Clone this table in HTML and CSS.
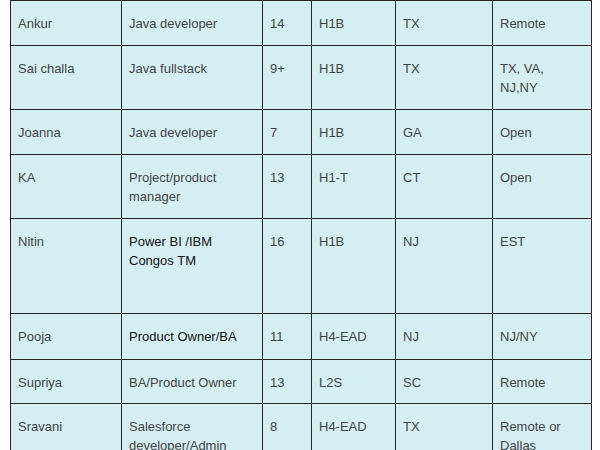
FILE: index.html
```html
<!DOCTYPE html>
<html>
<head>
<meta charset="utf-8">
<link rel="stylesheet" href="styles.css">
</head>
<body>
<table class="grid">
  <colgroup>
    <col class="c-name"><col class="c-role"><col class="c-exp"><col class="c-visa"><col class="c-state"><col class="c-loc">
  </colgroup>
  <tbody>
    <tr><td>Ankur</td><td>Java developer</td><td>14</td><td>H1B</td><td>TX</td><td>Remote</td></tr>
    <tr><td>Sai challa</td><td>Java fullstack</td><td>9+</td><td>H1B</td><td>TX</td><td>TX, VA,<br>NJ,NY</td></tr>
    <tr><td>Joanna</td><td>Java developer</td><td>7</td><td>H1B</td><td>GA</td><td>Open</td></tr>
    <tr><td>KA</td><td>Project/product manager</td><td>13</td><td>H1-T</td><td>CT</td><td>Open</td></tr>
    <tr class="tall"><td>Nitin</td><td class="dark">Power BI /IBM Congos TM</td><td>16</td><td>H1B</td><td>NJ</td><td>EST</td></tr>
    <tr class="plus"><td>Pooja</td><td class="dark">Product Owner/BA</td><td>11</td><td>H4-EAD</td><td>NJ</td><td>NJ/NY</td></tr>
    <tr class="minus"><td>Supriya</td><td>BA/Product Owner</td><td>13</td><td>L2S</td><td>SC</td><td>Remote</td></tr>
    <tr><td>Sravani</td><td>Salesforce developer/Admin</td><td>8</td><td>H4-EAD</td><td>TX</td><td>Remote or Dallas</td></tr>
  </tbody>
</table>
</body>
</html>
```
FILE: styles.css
```css
html, body {
  margin: 0;
  padding: 0;
  background: #ffffff;
}
body {
  font-family: "Liberation Sans", Arial, sans-serif;
  font-size: 13px;
  line-height: 19px;
  color: #444444;
}
.grid {
  margin-left: 10px;
  border-collapse: collapse;
  table-layout: fixed;
  width: 581px;
  background: #d5eef3;
}
.c-name { width: 111px; }
.c-role { width: 141px; }
.c-exp { width: 49px; }
.c-visa { width: 84px; }
.c-state { width: 97px; }
.c-loc { width: 99px; }
.grid td {
  border: 1px solid #262626;
  padding: 13px 7px 12px 7px;
  vertical-align: top;
  text-align: left;
}
.grid .dark { color: #111111; }
.grid .tall td { padding-bottom: 43px; }
.grid .plus td { padding-bottom: 13px; }
.grid .minus td { padding-bottom: 11px; }
```
